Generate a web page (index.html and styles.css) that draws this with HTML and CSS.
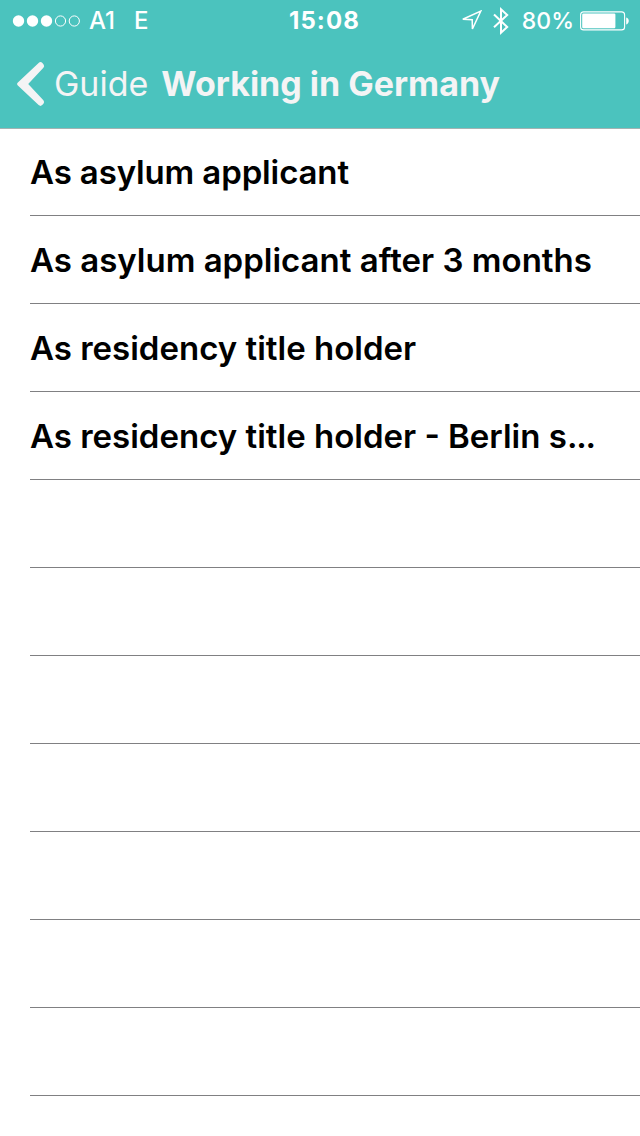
FILE: index.html
```html
<!DOCTYPE html>
<html lang="en">
<head>
<meta charset="utf-8">
<title>Working in Germany</title>
<link rel="stylesheet" href="styles.css">
</head>
<body>
<header class="header">
  <div class="status">
    <div class="status-left">
      <svg class="signal" width="68" height="12" viewBox="0 0 68 12">
        <g fill="#fff"><circle cx="6.5" cy="6" r="5.7"/><circle cx="20.5" cy="6" r="5.7"/><circle cx="34.5" cy="6" r="5.7"/></g>
        <g fill="none" stroke="#fff"><circle cx="48.5" cy="6" r="5.1"/><circle cx="62.3" cy="6" r="5.1"/></g>
      </svg>
      <span class="carrier">A1</span>
      <span class="network">E</span>
    </div>
    <div class="clock">15:08</div>
    <div class="status-right">
      <svg class="location" width="22" height="22" viewBox="0 0 22 22"><path d="M2.8 9.3 20.8 1.1 12.4 19 12.2 9.7Z" fill="none" stroke="#fff" stroke-width="1.5"/></svg>
      <svg class="bluetooth" width="16" height="28" viewBox="0 0 16 28"><path d="M1 7.5 14.2 20 8 25.7V2.3L14.2 8 1 20.3" fill="none" stroke="#fff" stroke-width="2"/></svg>
      <span class="percent">80%</span>
      <svg class="battery" width="50" height="20" viewBox="0 0 50 20"><rect x=".6" y=".9" width="44" height="18" rx="3" fill="none" stroke="#fff" stroke-width="1.1"/><rect x="2.2" y="2.5" width="33.2" height="14.8" rx="1.2" fill="#fff"/><path d="M46.2 6.5c3.4.8 3.4 6 0 7z" fill="#fff"/></svg>
    </div>
  </div>
  <nav class="nav">
    <svg class="chevron" width="30" height="48" viewBox="0 0 30 48"><path d="M22.6 2.9Q24.6 1.2 26.4 3L27.6 4.4Q28.8 6.2 27.4 7.8L12.2 24 27.4 40.2Q28.8 41.9 27.6 43.6L26.2 45.1Q24.6 46.7 22.6 45.1L1.6 25.3Q.4 24 1.6 22.7Z" fill="#f4f4f5"/></svg>
    <span class="back">Guide</span>
    <h1 class="title">Working in Germany</h1>
  </nav>
</header>
<ul class="list">
  <li class="row"><span class="label label-tight">As asylum applicant</span></li>
  <li class="row"><span class="label">As asylum applicant after 3 months</span></li>
  <li class="row"><span class="label">As residency title holder</span></li>
  <li class="row"><span class="label">As residency title holder - Berlin s<span class="ellipsis">...</span></span></li>
  <li class="row"></li>
  <li class="row"></li>
  <li class="row"></li>
  <li class="row"></li>
  <li class="row"></li>
  <li class="row"></li>
  <li class="row"></li>
</ul>
</body>
</html>
```

FILE: styles.css
```css
* { box-sizing: border-box; }
body {
  margin: 0;
  height: 1136px;
  overflow: hidden;
  background: #fff;
  color: #000;
  font-family: Inter, "Liberation Sans", sans-serif;
  white-space: nowrap;
}
svg { display: block; flex: none; }
.header {
  height: 129px;
  background: #4bc3be;
  border-bottom: 1px solid #a3b3b3;
  color: #fff;
}
.status {
  display: grid;
  grid-template-columns: 1fr auto 1fr;
  height: 40px;
  padding: 1px 10px 0 12px;
  font-size: 24px;
  line-height: 40px;
}
.status-left, .status-right { display: flex; align-items: center; height: 40px; }
.status-right { justify-content: flex-end; }
.carrier { margin-left: 9px; font-weight: 550; }
.network { margin-left: 19px; font-weight: 550; }
.clock { font-weight: 700; letter-spacing: 1.1px; padding-left: 7px; }
.percent { font-weight: 550; font-size: 23px; margin-left: 13px; }
.bluetooth { margin-left: 11px; }
.battery { margin-left: 6px; }
.nav {
  display: flex;
  align-items: center;
  height: 88px;
  padding-left: 16px;
  color: #f4f4f5;
  font-size: 34px;
}
.back, .title { line-height: 42px; }
.back { margin-left: 8px; }
.title { margin: 0 0 0 13px; font-size: 34px; font-weight: 700; letter-spacing: 0; }
.list { margin: -1px 0 0; padding: 0 0 0 30px; list-style: none; }
.row {
  display: flex;
  align-items: center;
  height: 88px;
  border-bottom: 1px solid #808082;
}
.label { font-size: 33px; font-weight: 600; line-height: 44px; }
.label-tight { letter-spacing: -0.13px; }
.ellipsis { letter-spacing: -1.2px; }
```
